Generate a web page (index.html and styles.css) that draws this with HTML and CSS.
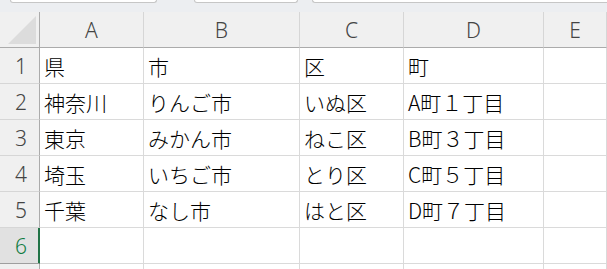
FILE: index.html
```html
<!DOCTYPE html>
<html lang="ja">
<head>
<meta charset="utf-8">
<link rel="stylesheet" href="styles.css">
</head>
<body>
<div class="app">
  <div class="topbar">
    <div class="box box-name"></div>
    <div class="box box-mid"></div>
    <div class="box box-formula"></div>
  </div>
  <div class="sheet">
    <div class="corner"><svg width="39" height="35" viewBox="0 0 39 35"><polygon points="8,32 36,32 36,4" fill="#dcdcdc"/></svg></div>
    <div class="colhdr">A</div>
    <div class="colhdr">B</div>
    <div class="colhdr">C</div>
    <div class="colhdr">D</div>
    <div class="colhdr">E</div>

    <div class="rowhdr">1</div>
    <div class="cell">県</div>
    <div class="cell">市</div>
    <div class="cell">区</div>
    <div class="cell">町</div>
    <div class="cell"></div>

    <div class="rowhdr">2</div>
    <div class="cell">神奈川</div>
    <div class="cell">りんご市</div>
    <div class="cell">いぬ区</div>
    <div class="cell">A町１丁目</div>
    <div class="cell"></div>

    <div class="rowhdr">3</div>
    <div class="cell">東京</div>
    <div class="cell">みかん市</div>
    <div class="cell">ねこ区</div>
    <div class="cell">B町３丁目</div>
    <div class="cell"></div>

    <div class="rowhdr">4</div>
    <div class="cell">埼玉</div>
    <div class="cell">いちご市</div>
    <div class="cell">とり区</div>
    <div class="cell">C町５丁目</div>
    <div class="cell"></div>

    <div class="rowhdr">5</div>
    <div class="cell">千葉</div>
    <div class="cell">なし市</div>
    <div class="cell">はと区</div>
    <div class="cell">D町７丁目</div>
    <div class="cell"></div>

    <div class="rowhdr active">6</div>
    <div class="cell"></div>
    <div class="cell"></div>
    <div class="cell"></div>
    <div class="cell"></div>
    <div class="cell"></div>

    <div class="rowhdr"></div>
    <div class="cell"></div>
    <div class="cell"></div>
    <div class="cell"></div>
    <div class="cell"></div>
    <div class="cell"></div>
  </div>
</div>
</body>
</html>
```

FILE: styles.css
```css
* { box-sizing: border-box; }
html, body { margin: 0; padding: 0; background: #ffffff; }
.app { width: 607px; height: 269px; overflow: hidden; }

.topbar {
  height: 12px;
  background: #eceef1;
  display: flex;
  align-items: flex-start;
}
.box {
  height: 3px;
  background: #ffffff;
  border: 1px solid #c6c6c6;
  border-top: none;
  border-radius: 0 0 4px 4px;
}
.box-name { margin-left: 10px; width: 147px; }
.box-mid { margin-left: 37px; width: 104px; }
.box-formula { margin-left: 14px; flex: 1; border-right: none; border-radius: 0 0 0 4px; }

.sheet {
  display: grid;
  grid-template-columns: 40px 104px 156px 104px 140px 1fr;
  grid-auto-rows: 36px;
}

.corner, .colhdr, .rowhdr {
  background: #f0f0f0;
  color: #444444;
  font-family: "Noto Sans", "Liberation Sans", sans-serif;
  font-weight: 300;
  font-size: 21px;
  display: flex;
  align-items: center;
  justify-content: center;
}
.corner {
  border-right: 1px solid #ababab;
  border-bottom: 1px solid #ababab;
  align-items: flex-start;
  justify-content: flex-start;
}
.corner svg { display: block; }
.colhdr {
  border-right: 1px solid #d6d6d6;
  border-bottom: 1px solid #ababab;
  padding-top: 1px;
}
.rowhdr {
  border-right: 1px solid #ababab;
  border-bottom: 1px solid #d6d6d6;
  padding-left: 3px;
}
.rowhdr.active {
  background: #e1e1e1;
  color: #107c41;
  border-right-color: #217346;
  box-shadow: inset -1px 0 0 #217346;
  border-bottom-color: #9e9e9e;
}

.cell {
  border-right: 1px solid #dadada;
  border-bottom: 1px solid #dadada;
  font-family: "Noto Sans CJK JP", "Noto Sans", sans-serif;
  font-weight: 300;
  font-size: 21px;
  color: #000000;
  padding-left: 4px;
  display: flex;
  align-items: center;
  white-space: nowrap;
  overflow: hidden;
  line-height: 1;
  padding-top: 2px;
}
```
